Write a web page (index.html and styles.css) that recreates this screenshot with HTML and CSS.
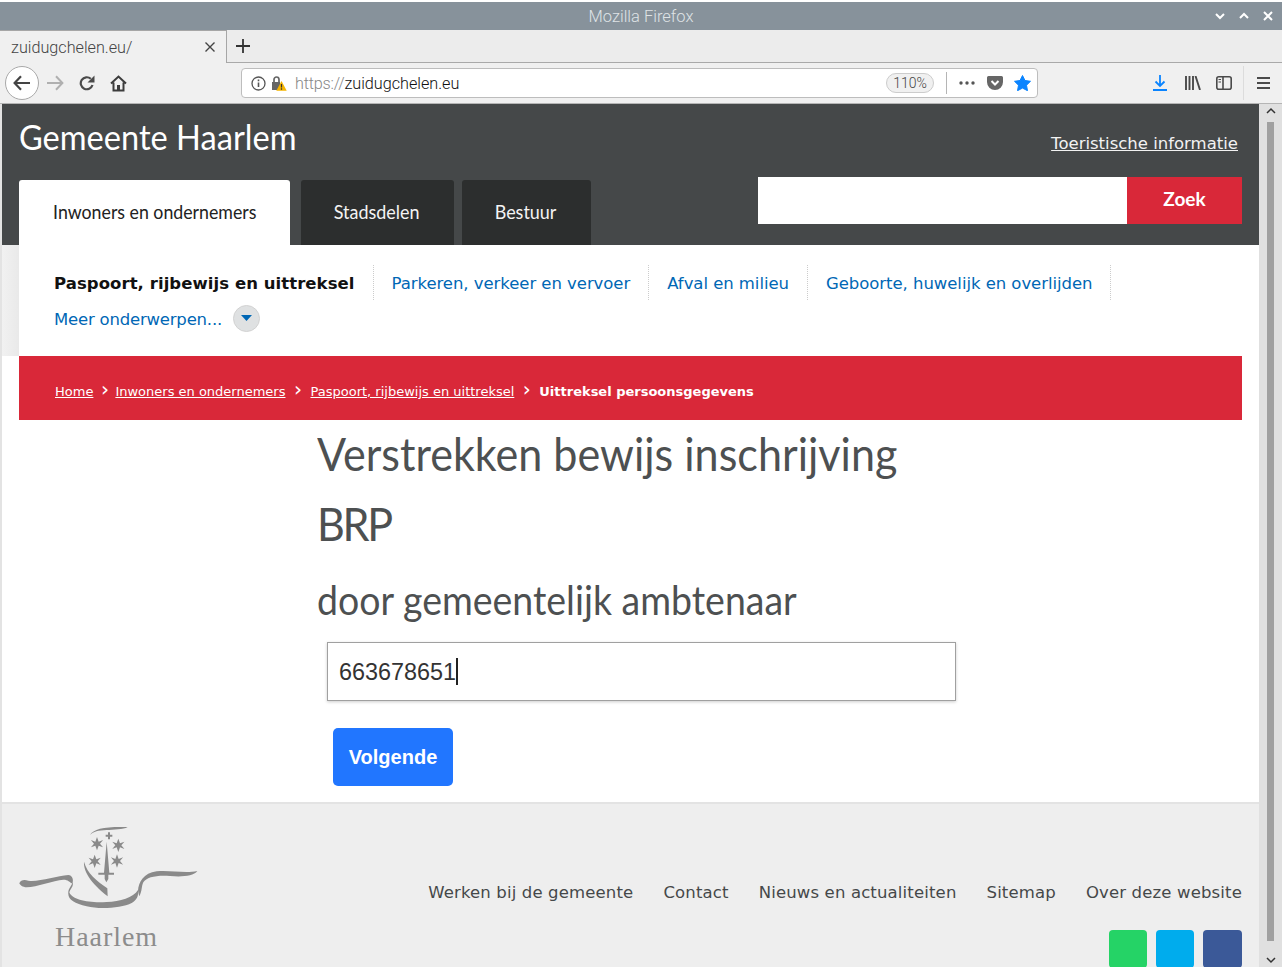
FILE: index.html
```html
<!DOCTYPE html>
<html lang="nl"><head><meta charset="utf-8"><title>Firefox</title><link rel="stylesheet" href="styles.css"></head>
<body>
<div class="titlebar"><span class="title">Mozilla Firefox</span>
<div class="winbtns">
<svg width="12" height="12" viewBox="0 0 12 12"><path d="M2 4l4 4 4-4" fill="none" stroke="#fff" stroke-width="2"/></svg>
<svg width="12" height="12" viewBox="0 0 12 12"><path d="M2 8l4-4 4 4" fill="none" stroke="#fff" stroke-width="2"/></svg>
<svg width="12" height="12" viewBox="0 0 12 12"><path d="M2 2l8 8M10 2l-8 8" fill="none" stroke="#fff" stroke-width="2"/></svg>
</div></div>
<div class="tabbar">
<div class="tab"><span class="tabtext">zuidugchelen.eu/</span>
<svg class="tabx" width="10" height="10" viewBox="0 0 10 10"><path d="M0.500 .5l9 9M9.500 .5l-9 9" stroke="#444" stroke-width="1.400"/></svg></div>
<svg class="plus" width="14" height="14" viewBox="0 0 14 14"><path d="M7 0v14M0 7h14" stroke="#333" stroke-width="1.800"/></svg>
</div>
<div class="navbar">
<div class="back"><svg width="18" height="16" viewBox="0 0 18 16"><path d="M8 1.200L1.600 8 8 14.800M2 8h15" fill="none" stroke="#444" stroke-width="2.200"/></svg></div>
<svg class="fwd" width="18" height="16" viewBox="0 0 18 16"><path d="M10 1.200L16.400 8 10 14.800M16 8H1" fill="none" stroke="#b0b0b0" stroke-width="2"/></svg>
<svg class="reload" width="17" height="16" viewBox="0 0 17 16"><path d="M13.500 10A6 6 0 1 1 11.800 3.800" fill="none" stroke="#4a4a4a" stroke-width="2.200"/><path d="M15.500 0.500V7.500H8.500z" fill="#4a4a4a"/></svg>
<svg class="home" width="17" height="17" viewBox="0 0 17 17"><path d="M1 8.500L8.500 1.500 16 8.500M3.500 7.500V15.500H13.500V7.500" fill="none" stroke="#3c3c3c" stroke-width="2"/><rect x="7" y="10" width="3" height="5.500" fill="#3c3c3c"/></svg>
<div class="urlbar">
<svg width="15" height="15" viewBox="0 0 15 15"><circle cx="7.500" cy="7.500" r="6.500" fill="none" stroke="#555" stroke-width="1.300"/><path d="M7.500 6.500v4.500M7.500 3.500v1.700" stroke="#555" stroke-width="1.600"/></svg>
<svg class="lock" width="16" height="16" viewBox="0 0 16 16"><path d="M1 7h8v8H1z" fill="#666"/><path d="M3 7V4.500a2.500 2.500 0 0 1 5 0V7" fill="none" stroke="#666" stroke-width="1.700"/><path d="M10.500 6l5.200 9.700H5.300z" fill="#f5b400"/><path d="M10.500 9v3.500M10.500 13.300v1.400" stroke="#333" stroke-width="1.200"/></svg>
<span class="url"><span class="urlgrey">https://</span>zuidugchelen.eu</span>
<span class="zoom">110%</span>
<span class="urlsep"></span>
<svg class="dots" width="16" height="4" viewBox="0 0 16 4"><circle cx="2" cy="2" r="1.700" fill="#555"/><circle cx="8" cy="2" r="1.700" fill="#555"/><circle cx="14" cy="2" r="1.700" fill="#555"/></svg>
<svg class="pocket" width="16" height="14" viewBox="0 0 16 14"><path d="M1.500 0h13A1.500 1.500 0 0 1 16 1.500V6a8 8 0 0 1-16 0V1.500A1.500 1.500 0 0 1 1.500 0z" fill="#666"/><path d="M4.500 5l3.500 3.500L11.500 5" fill="none" stroke="#fff" stroke-width="2"/></svg>
<svg class="star" width="17" height="16" viewBox="0 0 17 16"><path d="M8.500 .5l2.500 5 5.500.8-4 3.900 1 5.500-5-2.600-5 2.600 1-5.500-4-3.900 5.500-.8z" fill="#0a84ff" stroke="#0a84ff" stroke-linejoin="round"/></svg>
</div>
<div class="tools">
<svg width="14" height="16" viewBox="0 0 14 16"><path d="M7 0v11M2.500 6.500L7 11l4.500-4.500M0 15h14" fill="none" stroke="#0a84ff" stroke-width="1.800"/></svg>
<svg class="lib" width="16" height="14" viewBox="0 0 16 14"><path d="M1 0v14M4.500 0v14M8 0v14M10.500 0l4.500 14" fill="none" stroke="#4a4a4a" stroke-width="1.900"/></svg>
<svg class="side" width="16" height="14" viewBox="0 0 16 14"><rect x=".8" y=".8" width="14.400" height="12.400" rx="2" fill="none" stroke="#4a4a4a" stroke-width="1.600"/><path d="M7 1v12" stroke="#4a4a4a" stroke-width="1.600"/><path d="M2.500 3.500H5M2.500 6H5" stroke="#4a4a4a"/></svg>
<span class="toolsep"></span>
<svg width="13" height="12" viewBox="0 0 13 12"><path d="M0 1h13M0 6h13M0 11h13" stroke="#4a4a4a" stroke-width="1.800"/></svg>
</div>
</div>

<div class="viewport">
<div class="page">
<header class="site-head">
<div class="head-top"><span class="brand">Gemeente Haarlem</span><a class="tourist">Toeristische informatie</a></div>
<div class="head-bottom">
<div class="tabs"><a class="stab active"><span>Inwoners en ondernemers</span></a><a class="stab city"><span>Stadsdelen</span></a><a class="stab gov"><span>Bestuur</span></a></div>
<form class="search"><span class="search-input"></span><span class="search-btn">Zoek</span></form>
</div>
</header>
<nav class="subnav-wrap"><div class="subnav">
<a class="sub cur">Paspoort, rijbewijs en uittreksel</a><a class="sub">Parkeren, verkeer en vervoer</a><a class="sub">Afval en milieu</a><a class="sub">Geboorte, huwelijk en overlijden</a>
<div class="more"><a>Meer onderwerpen...</a><span class="morebtn"><svg width="11" height="6" viewBox="0 0 11 6"><path d="M0 0h11L5.500 6z" fill="#0067b5"/></svg></span></div>
</div></nav>
<div class="crumbs"><a>Home</a><i>›</i><a>Inwoners en ondernemers</a><i class="wide">›</i><a>Paspoort, rijbewijs en uittreksel</a><i class="wide">›</i><b>Uittreksel persoonsgegevens</b></div>
<main class="main">
<h1>Verstrekken bewijs inschrijving<br><span class="brp">BRP</span></h1>
<h2>door gemeentelijk ambtenaar</h2>
<div class="field"><span>663678651</span><span class="caret"></span></div>
<button class="next" type="button">Volgende</button>
</main>
<footer class="foot">
<div class="logo">
<svg class="crest" width="180" height="85" viewBox="57 75 540 255"><g fill="#8a8a8a">
<path d="M270 108C280 88 320 82 383 84C370 92 340 92 320 93C295 94 280 98 270 108Z"/>
<path d="M324 100h6v7h7v6h-7v8h-6v-8h-7v-6h7z"/>
<path d="M291 114L296 127.900 309.300 123 300 134 309.300 145 296 140.100 291 154 286 140.100 272.700 145 282 134 272.700 123 286 127.900Z"/>
<path d="M355 119L360 132.900 373.300 128 364 139 373.300 150 360 145.100 355 159 350 145.100 336.700 150 346 139 336.700 128 350 132.900Z"/>
<path d="M284 167L289 180.900 302.300 176 293 187 302.300 198 289 193.100 284 207 279 193.100 265.700 198 275 187 265.700 176 279 180.900Z"/>
<path d="M351 166L356 179.900 369.300 175 360 186 369.300 197 356 192.100 351 206 346 192.100 332.700 197 342 186 332.700 175 346 179.900Z"/>
<path d="M320 128L328 221H342V227H325V240L319 250L314 240V227H295V221H312Z"/>
<path d="M252 188C250 215 270 250 323 292L322 268C290 245 262 225 252 188Z"/>
<path d="M58 253C62 243 72 241 85 245C115 250 170 230 205 228C216 229 222 240 217 254C208 249 205 242 190 242C160 244 110 264 80 265C68 265 60 258 58 253Z"/>
<path d="M218 250C222 262 210 270 208 280C215 303 270 313 320 309C360 308 400 296 414 273C416 290 412 302 395 312C365 327 300 332 260 322C225 314 205 302 205 285C203 270 215 262 218 250Z"/>
<path d="M414 275C416 250 430 222 470 217C510 213 555 224 592 216C580 232 545 234 510 231C470 228 440 234 430 250C424 262 427 275 418 292C416 285 415 280 414 275Z"/>
</g></svg>
<span class="logotext">Haarlem</span></div>
<div class="foot-right">
<div class="foot-links"><a>Werken bij de gemeente</a><a>Contact</a><a>Nieuws en actualiteiten</a><a>Sitemap</a><a>Over deze website</a></div>
<div class="socials"><span class="s1"></span><span class="s2"></span><span class="s3"></span></div>
</div>
</footer>
</div>
<div class="scrollbar">
<svg class="sup" width="12" height="8" viewBox="0 0 12 8"><path d="M2 6l4-4 4 4" fill="none" stroke="#333" stroke-width="1.500"/></svg>
<span class="thumb"></span>
<svg class="sdown" width="12" height="8" viewBox="0 0 12 8"><path d="M2 2l4 4 4-4" fill="none" stroke="#333" stroke-width="1.500"/></svg>
</div>
</div>
</body></html>
```
FILE: styles.css
```css
*{box-sizing:border-box}
html,body{margin:0;height:969px;overflow:hidden;background:#fff}
body{font-family:"DejaVu Sans",sans-serif;width:1282px}
a{color:inherit}
.titlebar{height:28px;margin-top:2px;background:#87929b;color:#dfe3e6;position:relative;display:flex;align-items:center;justify-content:center;font:300 16.500px Roboto,sans-serif}
.title{margin-top:1px}
.winbtns{position:absolute;right:8px;top:8px;display:flex;gap:12px}
.tabbar{height:33px;background:#ececec;border-bottom:1px solid #a9a9a9;display:flex;align-items:center}
.tab{width:227px;height:33px;background:#f0f0f0;border-top:1px solid #a6a6a6;border-right:1px solid #a6a6a6;display:flex;align-items:center;justify-content:space-between;padding:1px 11px 0;color:#444;font:300 16.200px Roboto,sans-serif}
.plus{margin-left:9px}
.navbar{height:41px;background:#f0f0f0;border-bottom:1px solid #b5b5b5;display:flex;align-items:center}
.back{width:34px;height:34px;border:1px solid #a9a9a9;border-radius:50%;background:#fff;margin-left:5px;display:flex;align-items:center;justify-content:center}
.fwd{margin-left:7px}
.reload{margin-left:15px}
.home{margin-left:14px}
.urlbar{margin-left:114px;width:797px;height:30px;background:#fff;border:1px solid #bdbdbd;border-radius:4px;display:flex;align-items:center;padding-left:9px}
.lock{margin-left:5px}
.url{margin-left:8px;font:300 16.200px Roboto,sans-serif;color:#111;width:591px;white-space:nowrap}
.urlgrey{color:#888;letter-spacing:-.2px}
.zoom{width:48px;height:20px;border:1px solid #ccc;border-radius:10px;background:#f0f0f0;font:300 14px Roboto,sans-serif;color:#444;display:flex;align-items:center;justify-content:center}
.urlsep{width:1px;height:22px;background:#b5b5b5;margin-left:12px}
.dots{margin-left:12px}
.pocket{margin-left:12px}
.star{margin-left:11px}
.tools{display:flex;align-items:center;margin-left:115px;gap:17px}
.lib{margin-left:1px}
.side{margin-left:-2px}
.toolsep{width:1px;height:34px;background:#dcdcdc;margin:0 -4px 0 -6px}
.viewport{height:863px;display:flex;border-left:2px solid #e3e3e3;background:#fff}
.page{width:1257px;height:863px;overflow:hidden;background:#fff}
.scrollbar{width:23px;height:863px;background:#e0e0e0;position:relative;display:flex;flex-direction:column;align-items:center;justify-content:space-between;padding:3px 0}
.thumb{position:absolute;left:8px;top:18px;width:7px;height:819px;background:#a0a0a0}
.site-head{height:141px;background:#454849;padding:0 17px;display:flex;flex-direction:column;justify-content:space-between}
.head-top{display:flex;justify-content:space-between;align-items:flex-start;color:#fff}
.brand{font:400 35px/1 Lato,sans-serif;margin-top:15px;transform:scaleX(.931);transform-origin:0 0}
.tourist{font-size:16.500px;text-decoration:underline;margin-top:30px;margin-right:4px;color:#f2f2f2}
.head-bottom{display:flex;justify-content:space-between;align-items:flex-start}
.tabs{display:flex;margin-top:3px}
.stab{height:65px;background:#2c2e2e;border-radius:3px 3px 0 0;color:#f4f4f4;font:400 19.500px/64px Lato,sans-serif;text-align:center;width:153px;margin-left:11px}
.stab span{display:inline-block;transform:scaleX(.92)}
.stab.active{background:#fff;color:#222;width:271px;margin-left:0}
.stab.active span{transform:scaleX(.91)}
.stab.city span{margin-left:-2px}
.stab.gov{width:129px;margin-left:8px}
.stab.gov span{margin-left:-2px}
.search{display:flex;height:47px;margin-bottom:21px}
.search-input{width:369px;background:#fff}
.search-btn{width:115px;background:#d92839;color:#fff;font:700 19px/43px Lato,sans-serif;text-align:center}
.subnav-wrap{height:111px;background:linear-gradient(90deg,#f1f1f1,#e9e9e9 17px,#fff 17px);padding-left:17px;width:1240px}
.subnav{background:#fff;height:111px;width:1223px;padding:20px 0 0 35px;display:flex;flex-wrap:wrap;align-content:flex-start;font-size:16.500px;color:#0067b5;letter-spacing:-.05px}
.sub{height:35px;line-height:38px;padding-right:18px;margin-right:18px;border-right:1px dotted #ccc;white-space:nowrap}
.sub.cur{color:#111;font-weight:700;letter-spacing:.06px}
.more{width:100%;display:flex;align-items:center;gap:11px;height:38px}
.more a{letter-spacing:-.2px}
.morebtn{width:27px;height:27px;border-radius:50%;background:#dfe1e2;border:1px solid #d2d2d2;display:flex;align-items:center;justify-content:center;margin-top:-2px}
.crumbs{margin-left:17px;width:1223px;height:64px;background:#d92839;color:#fff;font-size:13px;display:flex;align-items:center;padding:7px 0 0 36px}
.crumbs a{text-decoration:underline}
.crumbs i{font-style:normal;width:22px;padding-left:1px;text-align:center;margin-top:-6px;font-size:20px;font-weight:400}
.crumbs i.wide{width:25px;padding-left:0}
.crumbs b{font-weight:700}
.main{padding-left:315px;height:383px}
h1,h2{font-family:Lato,sans-serif;font-weight:400;color:#4d5051;transform:scaleX(.937);transform-origin:0 0}
h1{margin:-1px 0 0;font-size:46px;line-height:70px}
h2{margin:13px 0 0;font-size:40px;line-height:56px}
.brp{letter-spacing:-2.500px}
.field{margin:14px 0 0 10px;width:629px;height:59px;border:1px solid #a0a0a0;box-shadow:0 1px 3px rgba(0,0,0,.2);display:flex;align-items:center;padding:2px 0 0 11px;font:400 23.400px "Liberation Sans",sans-serif;color:#333}
.caret{width:2px;height:27px;background:#222;margin-top:-2px}
.next{display:block;margin:27px 0 0 16px;width:120px;height:58px;background:#2176ff;border:0;border-radius:5px;color:#fff;font:700 20px "Liberation Sans",sans-serif}
.foot{height:167px;background:#eee;border-top:2px solid #e3e3e3;padding:0 17px;display:flex;justify-content:space-between}
.logo{width:190px;padding-top:20px;display:flex;flex-direction:column;align-items:flex-start}
.crest{display:block}
.logotext{font:400 28px/1 "Liberation Serif",serif;letter-spacing:.95px;color:#8c8c8c;margin:14px 0 0 36px}
.foot-right{display:flex;flex-direction:column;align-items:flex-end}
.foot-links{display:flex;gap:30px;margin-top:79px;font-size:16.500px;letter-spacing:.15px;color:#454849}
.socials{display:flex;gap:9px;margin-top:28px}
.socials span{width:38px;height:38px;border-radius:4px}
.s1{background:#25d366}.s2{background:#00aced}.s3{background:#3b5998;width:39px!important}
```
